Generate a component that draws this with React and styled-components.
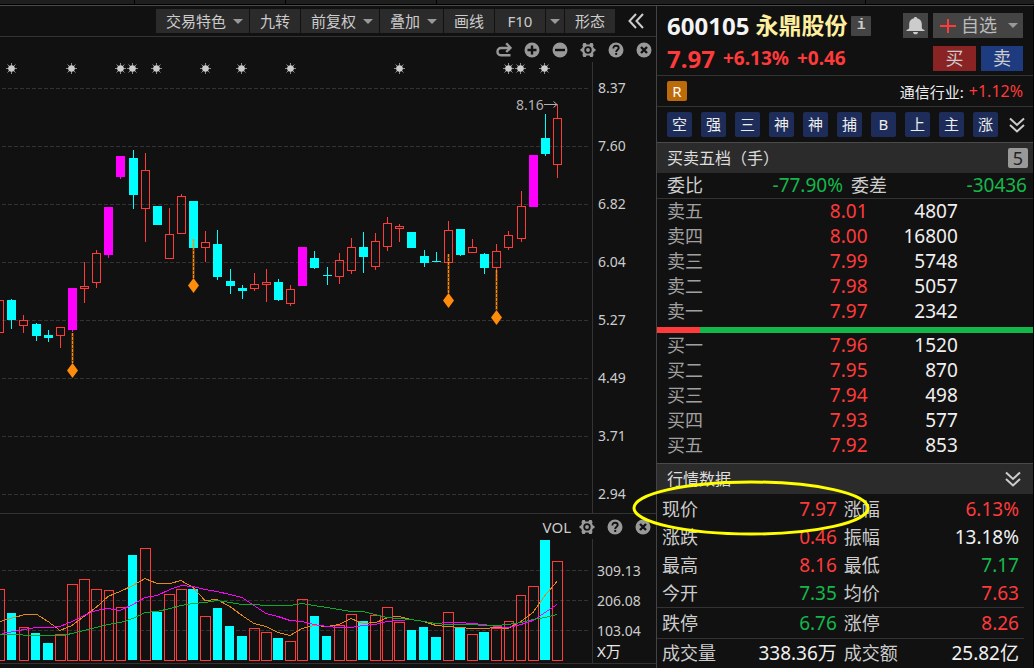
import React from "react";
import styled, { createGlobalStyle } from "styled-components";

const RED = "#ff3a3a";
const GREEN = "#14b84a";
const CYAN = "#00ffff";
const MAGENTA = "#ff00ff";
const ORANGE = "#ff8c0a";
const LINE = "#333333";

const GlobalStyle = createGlobalStyle`
  * { box-sizing: border-box; }
  body {
    margin: 0;
    background: #111111;
    color: #cccccc;
    font-family: "Noto Sans", "Noto Sans CJK SC", sans-serif;
    font-size: 15px;
  }
  button {
    font-family: inherit;
    color: inherit;
    border: 0;
    padding: 0;
    margin: 0;
    background: none;
    cursor: pointer;
  }
  svg { display: block; }
`;

/* ---------- page frame ---------- */

const Page = styled.div`
  display: flex;
  flex-direction: column;
  min-height: 100vh;
`;

const TopStrip = styled.div`
  display: grid;
  grid-template-columns: 13% 14.6% 14.6% 41.5% 1fr;
  height: 6px;
  border-bottom: 1px solid #4a4a4a;
  background: #000000;
`;

const StripTab = styled.div`
  height: 4px;
  background: #1e1e1e;
  border-left: ${(p) => (p.$first ? 0 : 1)}px solid #000000;
`;

const Main = styled.main`
  display: grid;
  grid-template-columns: minmax(0, 1fr) 378px;
  flex: 1;
`;

/* ---------- chart side ---------- */

const ChartSide = styled.section`
  display: flex;
  flex-direction: column;
`;

const Toolbar = styled.div`
  display: flex;
  justify-content: flex-end;
  align-items: center;
  gap: 1px;
  height: 31px;
  border-bottom: 1px solid ${LINE};
`;

const ToolButton = styled.button`
  display: flex;
  align-items: center;
  justify-content: center;
  gap: 7px;
  height: 24px;
  padding: 0 ${(p) => (p.$caret ? 6 : 10)}px 0 10px;
  background: #2b2b2b;
  font-size: 15px;
  line-height: 24px;
  white-space: nowrap;
`;

const InfoPageButton = styled(ToolButton)`
  width: 50px;
  padding: 0;
`;

const CaretButton = styled(ToolButton)`
  width: 18px;
  padding: 0;
`;

const CollapseButton = styled.button`
  display: flex;
  align-items: center;
  justify-content: center;
  width: 40px;
  height: 24px;
`;

const Caret = styled.span`
  border: 5px solid transparent;
  border-top-color: #999999;
  border-bottom: 0;
`;

const PaneHeader = styled.div`
  display: flex;
  align-items: center;
  justify-content: flex-end;
  gap: 12px;
  height: 25px;
  padding-right: ${(p) => p.$inset}px;
`;

const PaneTitle = styled.span`
  font-size: 15px;
  line-height: 20px;
  margin-right: -4px;
`;

const IconButton = styled.button`
  width: 16px;
  height: 16px;
`;

const Pane = styled.div`
  display: grid;
  grid-template-columns: minmax(0, 1fr) 64px;
  border-bottom: 1px solid ${LINE};
`;

const Plot = styled.svg`
  width: 100%;
  height: ${(p) => p.$height}px;
`;

const Axis = styled.div`
  display: flex;
  flex-direction: column;
  gap: ${(p) => p.$gap}px;
  padding: ${(p) => p.$top}px 0 0 5px;
  border-left: 1px solid ${LINE};
  font-size: 14px;
  line-height: 20px;
`;

const AxisBlock = styled.div`
  border-left: 1px solid ${LINE};
`;

const VolumeScale = styled(Axis)`
  border-left: 0;
  padding-left: 4px;
`;

const Unit = styled.div`
  padding-left: 4px;
  color: #e8e8e8;
  font-size: 15px;
  line-height: 20px;
`;

/* ---------- quote side ---------- */

const QuoteSide = styled.aside`
  border-left: 1px solid #444444;
  border-right: 1px solid #000000;
`;

const StockHeader = styled.header`
  display: flex;
  flex-direction: column;
  gap: 8px;
  padding: 7px 10px 4px;
  border-bottom: 1px solid ${LINE};
`;

const HeaderRow = styled.div`
  display: flex;
  align-items: center;
  height: 25px;
  white-space: nowrap;
`;

const StockName = styled.h1`
  display: flex;
  align-items: center;
  gap: 6px;
  margin: 0;
  font-size: 24px;
  line-height: 25px;
  color: #f4f4f4;
`;

const Name = styled.span`
  font-size: 23px;
  color: #fff0a0;
`;

const InfoButton = styled.button`
  width: 20px;
  height: 20px;
  margin-left: 4px;
  background: #444444;
  border-radius: 1px;
  font: bold 15px/20px "Liberation Mono", monospace;
`;

const Actions = styled.div`
  display: flex;
  gap: 5px;
  margin-left: auto;
`;

const BellButton = styled.button`
  display: flex;
  align-items: center;
  justify-content: center;
  width: 25px;
  height: 25px;
  background: #444444;
`;

const WatchButton = styled.button`
  display: flex;
  align-items: center;
  gap: 5px;
  width: 90px;
  height: 25px;
  padding: 0 5px 0 7px;
  background: #444444;
  color: #bbbbbb;
  font-size: 18px;
  line-height: 25px;

  ${Caret} { margin-left: auto; }
`;

const TradeButton = styled.button`
  width: ${(p) => (p.$side === "buy" ? 43 : 42)}px;
  height: 25px;
  background: ${(p) => (p.$side === "buy" ? "#8a2424" : "#1f3b80")};
  font-size: 18px;
  line-height: 25px;
`;

const Price = styled.strong`
  color: ${RED};
  font-size: 24px;
  line-height: 25px;
`;

const Change = styled.strong`
  margin-left: 8px;
  color: ${RED};
  font-size: 19px;
  line-height: 25px;
`;

const Industry = styled.div`
  display: flex;
  align-items: center;
  gap: 5px;
  height: 31px;
  padding: 0 10px;
  border-bottom: 1px solid ${LINE};
  color: #eeeeee;
`;

const MarginBadge = styled.span`
  width: 20px;
  height: 20px;
  margin-right: auto;
  border-radius: 2px;
  background: #bd6a08;
  color: #ffffff;
  font-size: 15px;
  line-height: 20px;
  text-align: center;
`;

const IndustryChange = styled.span`
  color: ${RED};
  font-size: 16px;
`;

const Chips = styled.div`
  display: flex;
  align-items: center;
  gap: 9px;
  height: 36px;
  padding: 0 8px 0 10px;
  border-bottom: 1px solid #4a4a4a;
`;

const Chip = styled.button`
  width: 25px;
  height: 25px;
  border-radius: 2px;
  background: #1d2c58;
  color: #eeeeee;
  font-size: 15px;
  line-height: 25px;
`;

const MoreButton = styled.button`
  margin-left: auto;
`;

const SectionHeader = styled.div`
  display: flex;
  align-items: center;
  justify-content: space-between;
  height: ${(p) => (p.$ruled ? 31 : 30)}px;
  padding: 0 ${(p) => (p.$ruled ? 12 : 5)}px 0 10px;
  border-top: ${(p) => (p.$ruled ? 1 : 0)}px solid #4a4a4a;
  background: #2b2b2b;
  color: #dddddd;
`;

const SectionTitle = styled.h2`
  margin: 0;
  font-size: 16px;
  font-weight: 400;
  line-height: 30px;
`;

const LevelBadge = styled.button`
  width: 20px;
  height: 20px;
  border-radius: 2px;
  background: #999999;
  color: #222222;
  font-size: 18px;
  line-height: 20px;
`;

const Ratio = styled.dl`
  display: grid;
  grid-template-columns: auto 1fr auto 1fr;
  column-gap: 8px;
  height: 26px;
  margin: 0;
  padding: 0 6px 0 10px;
  border-bottom: 1px solid ${LINE};
  font-size: 18px;
  line-height: 25px;
`;

const RatioLabel = styled.dt``;

const RatioValue = styled.dd`
  margin: 0;
  color: ${GREEN};
  font-size: 19px;
  text-align: right;
`;

const DataTable = styled.table`
  width: 100%;
  table-layout: fixed;
  border-spacing: 0;
`;

const DepthLabel = styled.th`
  padding: 0 0 0 10px;
  color: #a0a0a0;
  font-size: 18px;
  font-weight: 400;
  line-height: 25px;
  text-align: left;
  vertical-align: middle;
`;

const DepthCell = styled.td`
  padding: 0;
  color: ${(p) => (p.$price ? RED : "#f0f0f0")};
  font-size: 19px;
  line-height: 25px;
  text-align: right;
  vertical-align: middle;
`;

const DepthBar = styled.div`
  height: 6px;
  margin-top: 3px;
  background: ${GREEN};
`;

const DepthBarFill = styled.div`
  width: 11.4%;
  height: 100%;
  background: ${RED};
`;

const Bids = styled.div`
  padding-bottom: 5px;
`;

const QuoteData = styled.section`
  position: relative;
`;

const QuoteBody = styled.div`
  padding: 1px 9px 0 0;
`;

const QuoteLabel = styled.th`
  padding: 0 0 0 ${(p) => (p.$second ? 7 : 5)}px;
  border-bottom: ${(p) => (p.$ruled ? 1 : 0)}px solid ${LINE};
  font-size: 18px;
  font-weight: 400;
  line-height: ${(p) => p.$line}px;
  text-align: left;
  white-space: nowrap;
  vertical-align: middle;
`;

const QuoteCell = styled.td`
  padding: 0 ${(p) => (p.$last ? 5 : 0)}px 0 0;
  border-bottom: ${(p) => (p.$ruled ? 1 : 0)}px solid ${LINE};
  color: ${(p) => p.$color};
  font-size: 19px;
  line-height: ${(p) => p.$line}px;
  text-align: right;
  white-space: nowrap;
  vertical-align: middle;
`;

const Highlight = styled.svg`
  position: absolute;
  left: -26px;
  top: 16px;
  width: 240px;
  height: 58px;
  pointer-events: none;
`;

/* ---------- data ---------- */

// [x, top, bottom, high, low, kind]; kind: r hollow rise, c fall, m limit-up
const CANDLES = [
  [-1, 300, 333, 300, 333, "r"], [11, 300, 320, 299, 329, "c"], [23, 320, 326, 315, 333, "r"],
  [36, 324, 336, 323, 341, "c"], [48, 335, 338, 330, 342, "c"], [60, 327, 336, 327, 348, "r"],
  [72, 288, 330, 288, 332, "m"], [84, 286, 289, 262, 303, "r"], [96, 253, 283, 250, 288, "r"],
  [108, 207, 255, 207, 258, "m"], [120, 156, 177, 156, 179, "m"], [133, 158, 195, 150, 209, "c"],
  [145, 170, 209, 153, 242, "r"], [157, 206, 225, 206, 225, "c"], [169, 234, 259, 208, 259, "r"],
  [181, 196, 234, 194, 234, "r"], [193, 201, 248, 201, 248, "c"], [205, 242, 248, 231, 262, "r"],
  [217, 244, 277, 230, 280, "c"], [230, 281, 286, 269, 294, "c"], [242, 288, 291, 285, 299, "c"],
  [254, 284, 289, 273, 291, "r"], [266, 282, 285, 269, 302, "r"], [278, 282, 300, 279, 301, "c"],
  [290, 289, 304, 285, 306, "r"], [302, 247, 286, 247, 286, "m"], [314, 258, 268, 251, 269, "c"],
  [327, 275, 276, 267, 285, "c"], [339, 260, 277, 253, 284, "r"], [351, 247, 271, 238, 274, "r"],
  [363, 247, 257, 232, 273, "c"], [375, 241, 267, 233, 270, "r"], [387, 223, 247, 217, 251, "r"],
  [399, 226, 229, 224, 242, "r"], [411, 232, 248, 232, 248, "c"], [424, 256, 263, 250, 267, "c"],
  [436, 261, 262, 252, 262, "c"], [448, 230, 263, 221, 263, "r"], [460, 229, 255, 229, 256, "c"],
  [472, 247, 253, 239, 253, "r"], [484, 254, 268, 253, 274, "c"], [496, 251, 268, 244, 279, "r"],
  [508, 235, 248, 231, 250, "r"], [521, 206, 239, 191, 242, "r"], [533, 155, 207, 155, 207, "m"],
  [545, 138, 154, 114, 156, "c"], [557, 118, 165, 104, 178, "r"],
];

const SUNS = [11, 71, 120, 132, 156, 205, 241, 290, 399, 508, 520, 544];

// [x, line start, diamond centre]
const SIGNALS = [[72, 333, 370], [193, 239, 285], [448, 254, 300], [496, 270, 317]];

// [left, width, top, kind]
const VOLUMES = [
  [-6, 11, 589, "r"], [7, 9, 613, "c"], [19, 10, 627, "r"], [31, 9, 633, "c"], [43, 10, 643, "c"],
  [55, 11, 634, "r"], [67, 11, 584, "r"], [79, 11, 579, "r"], [91, 11, 589, "r"], [104, 10, 590, "r"],
  [116, 10, 607, "r"], [128, 9, 555, "c"], [140, 11, 548, "r"], [152, 10, 612, "c"], [164, 11, 594, "r"],
  [176, 11, 589, "r"], [188, 10, 589, "c"], [200, 11, 616, "r"], [213, 9, 608, "c"], [225, 9, 626, "c"],
  [237, 10, 636, "c"], [249, 11, 628, "r"], [261, 11, 632, "r"], [273, 10, 638, "c"], [285, 11, 641, "r"],
  [297, 11, 599, "r"], [310, 9, 616, "c"], [322, 9, 636, "c"], [334, 11, 625, "r"], [346, 11, 614, "r"],
  [358, 10, 621, "c"], [370, 11, 615, "r"], [382, 11, 607, "r"], [394, 11, 622, "r"], [407, 9, 630, "c"],
  [419, 9, 627, "c"], [431, 10, 637, "c"], [443, 11, 612, "r"], [455, 10, 627, "c"], [467, 11, 634, "r"],
  [479, 10, 632, "c"], [491, 11, 628, "r"], [504, 10, 621, "r"], [516, 10, 595, "r"], [528, 11, 586, "r"],
  [540, 10, 540, "c"], [552, 11, 561, "r"],
];

const MA5 = "0,621 14,617 25,614 37,614 48,621 60,630 72,625 84,616 96,607 108,596 120,591 133,585 145,578 157,583 170,583 181,580 193,587 205,600 217,599 230,606 242,615 254,623 266,626 278,632 290,635 302,628 314,625 327,626 339,624 351,618 363,623 376,622 388,617 399,616 411,619 424,621 436,625 448,626 460,627 472,628 484,628 496,627 508,628 521,621 533,612 545,595 557,581";
const MA10 = "2,633 14,631 24,629 36,627 48,627 60,626 72,621 84,615 96,610 108,608 120,610 133,604 145,597 157,595 170,589 181,585 193,586 205,589 217,591 230,594 242,597 254,605 266,613 278,616 290,620 302,621 314,624 327,626 339,627 351,627 363,625 375,624 387,621 399,620 411,619 424,621 436,623 448,622 460,622 472,623 484,624 496,626 508,627 521,624 533,620 545,612 557,604";
const MA20 = "0,634 22,634 24,635 62,635 72,633 84,630 96,627 108,624 120,622 133,618 145,612 157,611 170,608 181,605 193,603 205,602 217,600 230,602 242,604 254,604 266,605 290,605 302,603 314,605 327,607 339,609 351,611 363,611 375,614 387,617 399,618 411,619 424,621 436,623 448,624 472,624 484,625 496,625 508,624 521,622 533,619 545,617 557,614";

const ASKS = [["卖五", "8.01", "4807"], ["卖四", "8.00", "16800"], ["卖三", "7.99", "5748"], ["卖二", "7.98", "5057"], ["卖一", "7.97", "2342"]];
const BIDS = [["买一", "7.96", "1520"], ["买二", "7.95", "870"], ["买三", "7.94", "498"], ["买四", "7.93", "577"], ["买五", "7.92", "853"]];

const WHITE = "#f0f0f0";
const QUOTES = [
  { line: 28, a: ["现价", "7.97", RED], b: ["涨幅", "6.13%", RED] },
  { line: 28, a: ["涨跌", "0.46", RED], b: ["振幅", "13.18%", WHITE] },
  { line: 28, a: ["最高", "8.16", RED], b: ["最低", "7.17", GREEN] },
  { line: 28, a: ["今开", "7.35", GREEN], b: ["均价", "7.63", RED], ruled: true },
  { line: 30, a: ["跌停", "6.76", GREEN], b: ["涨停", "8.26", RED], ruled: true },
  { line: 29, a: ["成交量", "338.36万", WHITE], b: ["成交额", "25.82亿", WHITE] },
];

/* ---------- icons ---------- */

const GLYPH = "#999999";
const HOLE = "#111111";

const RedoIcon = () => (
  <svg width="16" height="16" viewBox="0 0 16 16" fill="none" stroke={GLYPH} strokeWidth="2.400">
    <path d="M14.500 13.300H4.800A3.400 3.400 0 0 1 1.500 9.800C1.500 7.400 3 6 5 6H13" />
    <path d="M10.200 1.200 14.400 5.800 10.200 10" />
  </svg>
);

const PlusIcon = () => (
  <svg width="16" height="16" viewBox="0 0 16 16">
    <circle cx="8" cy="8" r="7.500" fill={GLYPH} />
    <path d="M8 3.500V12.500M3.500 8H12.500" stroke={HOLE} strokeWidth="2.400" />
  </svg>
);

const MinusIcon = () => (
  <svg width="16" height="16" viewBox="0 0 16 16">
    <circle cx="8" cy="8" r="7.500" fill={GLYPH} />
    <path d="M3 8H13" stroke={HOLE} strokeWidth="2.400" />
  </svg>
);

const GearIcon = () => (
  <svg width="16" height="16" viewBox="0 0 16 16">
    <path
      d="M3.400 1H5.800L6.500 2.500H9.500L10.200 1H12.600L13.600 3.200 13 4.600 14 6.500 15.500 7V9L14 9.500 13 11.400 13.600 12.800 12.600 15H10.200L9.500 13.500H6.500L5.800 15H3.400L2.400 12.800 3 11.400 2 9.500.5 9V7L2 6.500 3 4.600 2.400 3.200Z"
      fill={GLYPH}
    />
    <circle cx="8" cy="8" r="2.800" fill={GLYPH} stroke={HOLE} strokeWidth="1.800" />
  </svg>
);

const HelpIcon = () => (
  <svg width="16" height="16" viewBox="0 0 16 16">
    <circle cx="8" cy="8" r="7.500" fill={GLYPH} />
    <path d="M5.400 6.400C5.400 4.600 6.500 3.800 8 3.800S10.700 4.700 10.700 6.100C10.700 7.700 8.200 8 8.200 9.900" fill="none" stroke={HOLE} strokeWidth="1.900" />
    <rect x="7.200" y="10.900" width="2" height="2" fill={HOLE} />
  </svg>
);

const CloseIcon = () => (
  <svg width="16" height="16" viewBox="0 0 16 16">
    <circle cx="8" cy="8" r="7.500" fill={GLYPH} />
    <path d="M5 5 11 11M11 5 5 11" stroke={HOLE} strokeWidth="2.400" />
  </svg>
);

const DoubleLeftIcon = () => (
  <svg width="16" height="16" viewBox="0 0 16 16" fill="none" stroke="#cccccc" strokeWidth="2">
    <path d="M8 1 1.500 8 8 15M15 1 8.500 8 15 15" />
  </svg>
);

const DoubleDownIcon = () => (
  <svg width="16" height="16" viewBox="0 0 16 16" fill="none" stroke="#cccccc" strokeWidth="2">
    <path d="M1 1.500 8 8 15 1.500M1 8 8 14.500 15 8" />
  </svg>
);

const BellIcon = () => (
  <svg width="19" height="19" viewBox="0 0 19 19" fill="#cccccc">
    <path d="M9.500 1C10.400 1 11 1.500 11 2.200 14 2.900 15.800 5 15.800 8V11.500C15.800 12.800 16.500 13.400 18.500 14V15H.5V14C2.500 13.400 3.200 12.800 3.200 11.500V8C3.200 5 5 2.900 8 2.200 8 1.500 8.600 1 9.500 1ZM7 16H12C11.800 17.500 11 18.300 9.500 18.300S7.200 17.500 7 16Z" />
  </svg>
);

const AddIcon = () => (
  <svg width="16" height="16" viewBox="0 0 16 16">
    <path d="M8 1V15M0 8H16" stroke={RED} strokeWidth="2" />
  </svg>
);

/* ---------- drawings ---------- */

function GridLines({ rows }) {
  return (
    <svg x="-4" overflow="visible">
      {rows.map((y) => (
        <line key={y} x1="6" x2="100%" y1={y + 0.5} y2={y + 0.5} stroke={LINE} strokeDasharray="4 2" />
      ))}
    </svg>
  );
}

function Candle({ x, top, bottom, high, low, kind }) {
  if (kind === "r") {
    return (
      <g>
        <path d={`M${x + 0.5} ${high}V${top}M${x + 0.5} ${bottom}V${low}`} stroke={RED} />
        <rect x={x - 3.5} y={top + 0.5} width="8" height={bottom - top - 1} fill="none" stroke={RED} />
      </g>
    );
  }
  const color = kind === "c" ? CYAN : MAGENTA;
  return (
    <g fill={color}>
      <rect x={x} y={high} width="1" height={low - high} />
      <rect x={x - 4} y={top} width="9" height={bottom - top} />
    </g>
  );
}

function Sun({ x }) {
  return (
    <g transform={`translate(${x + 0.5} 68.5)`}>
      <path d="M0-5.500V5.500M-5.500 0H5.500M-4-4 4 4M4-4-4 4" stroke="#8c8c8c" strokeWidth="1" />
      <circle r="3.300" fill="#cccccc" />
    </g>
  );
}

function Signal({ x, from, y }) {
  return (
    <g>
      <path d={`M${x + 0.5} ${from}V${y - 7}`} stroke={ORANGE} strokeWidth="3" strokeOpacity=".3" />
      <path d={`M${x + 0.5} ${from}V${y - 7}`} stroke={ORANGE} strokeDasharray="3 1" />
      <path d={`M${x + 0.5} ${y - 7}L${x + 6} ${y + 0.5}L${x + 0.5} ${y + 8}L${x - 5} ${y + 0.5}Z`} fill={ORANGE} />
    </g>
  );
}

function PricePlot() {
  return (
    <Plot $height={451} role="img" aria-label="日K线图">
      <g transform="translate(0 -62)">
        <GridLines rows={[88, 146, 204, 262, 320, 378, 436, 494]} />
      </g>
      <svg x="100%" overflow="visible">
        <g transform="translate(-592 -62)">
          {CANDLES.map(([x, top, bottom, high, low, kind]) => (
            <Candle key={x} x={x} top={top} bottom={bottom} high={high} low={low} kind={kind} />
          ))}
          {SUNS.map((x) => <Sun key={x} x={x} />)}
          {SIGNALS.map(([x, from, y]) => <Signal key={x} x={x} from={from} y={y} />)}
          <text x="516" y="110" fill="#b0b0b0" fontSize="14">8.16</text>
          <path d="M544 104.500H557M553.500 101.500 557 104.500 553.500 107.500" fill="none" stroke="#b0b0b0" />
        </g>
      </svg>
    </Plot>
  );
}

function VolumePlot() {
  return (
    <Plot $height={124} role="img" aria-label="成交量图">
      <g transform="translate(0 -539)">
        <GridLines rows={[570, 600, 630]} />
      </g>
      <svg x="100%" overflow="visible">
        <g transform="translate(-592 -539)">
          {VOLUMES.map(([x, w, top, kind]) =>
            kind === "r" ? (
              <rect key={x} x={x + 0.5} y={top + 0.5} width={w - 1} height={660 - top} fill="none" stroke={RED} />
            ) : (
              <rect key={x} x={x} y={top} width={w} height={660 - top} fill={CYAN} />
            )
          )}
          <g fill="none" shapeRendering="crispEdges" transform="translate(0 .5)">
            <polyline points={MA5} stroke="#e08a1e" />
            <polyline points={MA10} stroke={MAGENTA} />
            <polyline points={MA20} stroke="#0fa82e" />
          </g>
        </g>
      </svg>
    </Plot>
  );
}

function DepthTable({ rows, label }) {
  return (
    <DataTable aria-label={label}>
      <colgroup>
        <col width="27%" />
        <col width="29%" />
        <col width="24%" />
        <col />
      </colgroup>
      <tbody>
        {rows.map(([level, price, volume]) => (
          <tr key={level}>
            <DepthLabel scope="row">{level}</DepthLabel>
            <DepthCell $price>{price}</DepthCell>
            <DepthCell>{volume}</DepthCell>
            <DepthCell />
          </tr>
        ))}
      </tbody>
    </DataTable>
  );
}

function QuoteTable() {
  return (
    <DataTable aria-label="行情数据">
      <colgroup>
        <col width="16%" />
        <col width="33%" />
        <col width="17%" />
        <col />
      </colgroup>
      <tbody>
        {QUOTES.map(({ line, a, b, ruled }) => (
          <tr key={a[0]}>
            <QuoteLabel scope="row" $line={line} $ruled={ruled}>{a[0]}</QuoteLabel>
            <QuoteCell $line={line} $ruled={ruled} $color={a[2]}>{a[1]}</QuoteCell>
            <QuoteLabel scope="row" $second $line={line} $ruled={ruled}>{b[0]}</QuoteLabel>
            <QuoteCell $last $line={line} $ruled={ruled} $color={b[2]}>{b[1]}</QuoteCell>
          </tr>
        ))}
      </tbody>
    </DataTable>
  );
}

export default function App() {
  return (
    <Page>
      <GlobalStyle />
      <TopStrip>
        <StripTab $first /><StripTab /><StripTab /><StripTab /><StripTab />
      </TopStrip>
      <Main>
        <ChartSide>
          <Toolbar>
            <ToolButton $caret>交易特色<Caret /></ToolButton>
            <ToolButton>九转</ToolButton>
            <ToolButton $caret>前复权<Caret /></ToolButton>
            <ToolButton $caret>叠加<Caret /></ToolButton>
            <ToolButton>画线</ToolButton>
            <InfoPageButton>F10</InfoPageButton>
            <CaretButton aria-label="F10 菜单"><Caret /></CaretButton>
            <ToolButton>形态</ToolButton>
            <CollapseButton aria-label="收起"><DoubleLeftIcon /></CollapseButton>
          </Toolbar>
          <PaneHeader $inset={4}>
            <IconButton aria-label="刷新"><RedoIcon /></IconButton>
            <IconButton aria-label="放大"><PlusIcon /></IconButton>
            <IconButton aria-label="缩小"><MinusIcon /></IconButton>
            <IconButton aria-label="设置"><GearIcon /></IconButton>
            <IconButton aria-label="帮助"><HelpIcon /></IconButton>
            <IconButton aria-label="关闭"><CloseIcon /></IconButton>
          </PaneHeader>
          <Pane>
            <PricePlot />
            <Axis $gap={38} $top={16}>
              {["8.37", "7.60", "6.82", "6.04", "5.27", "4.49", "3.71", "2.94"].map((v) => (
                <span key={v}>{v}</span>
              ))}
            </Axis>
          </Pane>
          <PaneHeader $inset={5}>
            <PaneTitle>VOL</PaneTitle>
            <IconButton aria-label="设置"><GearIcon /></IconButton>
            <IconButton aria-label="帮助"><HelpIcon /></IconButton>
            <IconButton aria-label="关闭"><CloseIcon /></IconButton>
          </PaneHeader>
          <Pane>
            <VolumePlot />
            <AxisBlock>
              <VolumeScale $gap={10} $top={22}>
                <span>309.13</span>
                <span>206.08</span>
                <span>103.04</span>
              </VolumeScale>
              <Unit>X万</Unit>
            </AxisBlock>
          </Pane>
        </ChartSide>

        <QuoteSide>
          <StockHeader>
            <HeaderRow>
              <StockName>600105<Name>永鼎股份</Name></StockName>
              <InfoButton aria-label="公司信息">i</InfoButton>
              <Actions>
                <BellButton aria-label="预警"><BellIcon /></BellButton>
                <WatchButton><AddIcon />自选<Caret /></WatchButton>
              </Actions>
            </HeaderRow>
            <HeaderRow>
              <Price>7.97</Price>
              <Change>+6.13%</Change>
              <Change>+0.46</Change>
              <Actions>
                <TradeButton $side="buy">买</TradeButton>
                <TradeButton $side="sell">卖</TradeButton>
              </Actions>
            </HeaderRow>
          </StockHeader>
          <Industry>
            <MarginBadge>R</MarginBadge>
            <span>通信行业:</span>
            <IndustryChange>+1.12%</IndustryChange>
          </Industry>
          <Chips>
            {["空", "强", "三", "神", "神", "捕", "B", "上", "主", "涨"].map((c, i) => (
              <Chip key={i}>{c}</Chip>
            ))}
            <MoreButton aria-label="更多标签"><DoubleDownIcon /></MoreButton>
          </Chips>
          <SectionHeader>
            <SectionTitle>买卖五档（手）</SectionTitle>
            <LevelBadge>5</LevelBadge>
          </SectionHeader>
          <Ratio>
            <RatioLabel>委比</RatioLabel>
            <RatioValue>-77.90%</RatioValue>
            <RatioLabel>委差</RatioLabel>
            <RatioValue>-30436</RatioValue>
          </Ratio>
          <DepthTable rows={ASKS} label="卖盘" />
          <DepthBar><DepthBarFill /></DepthBar>
          <Bids><DepthTable rows={BIDS} label="买盘" /></Bids>
          <QuoteData>
            <SectionHeader $ruled>
              <SectionTitle>行情数据</SectionTitle>
              <button aria-label="展开"><DoubleDownIcon /></button>
            </SectionHeader>
            <QuoteBody><QuoteTable /></QuoteBody>
            <Highlight viewBox="0 0 240 58" aria-hidden="true">
              <ellipse cx="120" cy="29" rx="117" ry="26" fill="none" stroke="#ffff00" strokeWidth="3" />
            </Highlight>
          </QuoteData>
        </QuoteSide>
      </Main>
    </Page>
  );
}
